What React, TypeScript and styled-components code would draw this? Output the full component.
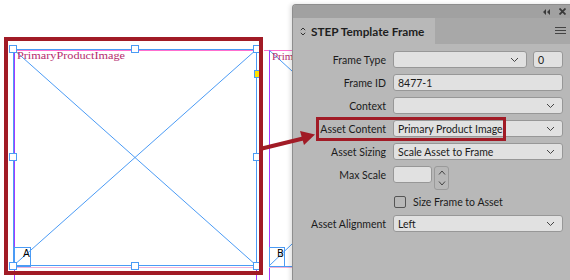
import { createGlobalStyle, styled } from "styled-components";

const Global = createGlobalStyle`
  html, body { margin: 0; padding: 0; background: #ffffff; }
  body { font-family: Lato, "Open Sans", sans-serif; }
`;

const Stage = styled.div`
  position: relative;
  width: 570px;
  height: 280px;
  overflow: hidden;
  background: #ffffff;
`;

const Canvas = styled.svg`
  position: absolute;
  left: 0;
  top: 0;
`;

const Callout = styled.div`
  position: absolute;
  left: 4px;
  top: 37px;
  width: 251px;
  height: 230px;
  border: 4px solid #a11b26;
`;

const Panel = styled.div`
  position: absolute;
  left: 292px;
  top: 4px;
  width: 282px;
  height: 280px;
  background: #b8b8b8;
  border-left: 1px solid #8e8e8e;
  border-top: 1px solid #8e8e8e;
  border-radius: 4px 0 0 0;
  box-shadow: -2px 0 4px rgba(0, 0, 0, 0.12);
  display: flex;
  flex-direction: column;
  font-family: Lato, "Open Sans", sans-serif;
  font-size: 10.5px;
  color: #1b1b1b;
`;

const TopBar = styled.div`
  height: 13px;
  background: #a1a1a1;
  border-radius: 3px 0 0 0;
  display: flex;
  align-items: center;
  justify-content: flex-end;
  gap: 9px;
  padding-right: 9px;
`;

const TabRow = styled.div`
  height: 26px;
  background: #a8a8a8;
  display: flex;
  align-items: stretch;
  justify-content: space-between;
`;

const Tab = styled.div`
  width: 135px;
  background: #b8b8b8;
  display: flex;
  align-items: center;
  gap: 5px;
  padding-left: 7px;
  font-size: 11.8px;
  font-weight: 700;
  white-space: nowrap;
  color: #1e1e1e;
`;

const MenuButton = styled.div`
  display: flex;
  align-items: center;
  padding-right: 9px;
`;

const Form = styled.div`
  position: relative;
  display: grid;
  grid-template-columns: 93px 170px;
  grid-auto-rows: minmax(17px, auto);
  column-gap: 7px;
  row-gap: 6px;
  padding-top: 7px;
  align-items: center;
`;

const Label = styled.div`
  text-align: right;
  white-space: nowrap;
`;

const Pair = styled.div`
  display: flex;
  gap: 6px;
  height: 17px;
`;

const Field = styled.div<{ $w?: number }>`
  position: relative;
  box-sizing: border-box;
  height: 17px;
  width: ${(p) => (p.$w ? `${p.$w}px` : "100%")};
  background: #e1e1e1;
  border: 1px solid #979797;
  border-radius: 3px;
  display: flex;
  align-items: center;
  padding-left: 4px;
  white-space: nowrap;
`;

const Chevron = styled.svg`
  position: absolute;
  right: 7px;
  top: 5px;
`;

const ScaleRow = styled.div`
  display: flex;
  gap: 2px;
  height: 17px;
  align-items: flex-start;
`;

const Spinner = styled.div`
  box-sizing: border-box;
  width: 15px;
  height: 24px;
  border: 1px solid #9a9a9a;
  border-radius: 3px;
  display: flex;
  flex-direction: column;
  align-items: center;
  justify-content: space-around;
`;

const CheckRow = styled.div`
  grid-column: 2;
  box-sizing: border-box;
  display: flex;
  align-items: center;
  gap: 7px;
  padding: 5px 0 0 1px;
  height: 20px;
`;

const Box = styled.div`
  box-sizing: border-box;
  width: 12px;
  height: 12px;
  border: 1px solid #555555;
  border-radius: 2px;
`;

const Highlight = styled.div`
  position: absolute;
  left: 23px;
  top: 73px;
  width: 184px;
  height: 18px;
  border: 3px solid #a11b26;
`;

const Arrow = styled.svg`
  position: absolute;
  left: 0;
  top: 0;
  pointer-events: none;
`;

const blue = "#4b9bf5";
const purple = "#a33cff";
const pink = "#ff6fcf";

function Handle({ x, y }: { x: number; y: number }) {
  return <rect x={x - 3.5} y={y - 3.5} width={7} height={7} fill="#fff" stroke={blue} strokeWidth={1} />;
}

function Down() {
  return (
    <Chevron width="9" height="6" viewBox="0 0 9 6">
      <path d="M1 1 L4.5 4.5 L8 1" fill="none" stroke="#444" strokeWidth="1" />
    </Chevron>
  );
}

function Dropdown({ value, w }: { value?: string; w?: number }) {
  return (
    <Field $w={w}>
      {value}
      <Down />
    </Field>
  );
}

export default function App() {
  const handles = [
    [13, 49], [135, 49], [257, 49],
    [13, 157], [257, 157],
    [13, 266], [135, 266], [257, 266],
  ];
  return (
    <Stage>
      <Global />
      <Canvas width="570" height="280" viewBox="0 0 570 280">
        <line x1="14.5" y1="49" x2="14.5" y2="280" stroke={purple} />
        <line x1="256.5" y1="49" x2="256.5" y2="280" stroke={purple} />
        <line x1="269.5" y1="50" x2="269.5" y2="280" stroke={purple} />
        <line x1="13" y1="50.5" x2="257" y2="50.5" stroke={pink} />
        <line x1="13" y1="267.5" x2="257" y2="267.5" stroke="#f2b2d8" />
        <line x1="264" y1="50.5" x2="292" y2="50.5" stroke={pink} />
        <rect x="13.5" y="49.5" width="243" height="216" fill="none" stroke={blue} />
        <line x1="13" y1="49" x2="257" y2="266" stroke={blue} />
        <line x1="257" y1="49" x2="13" y2="266" stroke={blue} />
        <text x="17" y="59" fontFamily="'Liberation Serif', serif" fontSize="11" fill="#b52c6e" textLength="108" lengthAdjust="spacingAndGlyphs">PrimaryProductImage</text>
        <rect x="14.5" y="247.5" width="16" height="19" fill="none" stroke={blue} />
        <text x="23" y="257" fontFamily="'DejaVu Sans', sans-serif" fontSize="10" fill="#000">A</text>
        {handles.map(([x, y]) => (
          <Handle key={`${x}-${y}`} x={x} y={y} />
        ))}
        <rect x="254.5" y="70.5" width="6" height="7" fill="#ffe100" stroke={blue} />
        <line x1="269" y1="50" x2="292" y2="71" stroke={blue} />
        <text x="272" y="60" fontFamily="'Liberation Serif', serif" fontSize="11" fill="#b52c6e">Prim</text>
        <line x1="269" y1="266.5" x2="292" y2="266.5" stroke={blue} />
        <line x1="269" y1="267.5" x2="292" y2="267.5" stroke="#f2b2d8" />
        <line x1="269" y1="266" x2="292" y2="244" stroke={blue} />
        <rect x="269.5" y="247.5" width="15" height="19" fill="none" stroke={blue} />
        <text x="277" y="257" fontFamily="'DejaVu Sans', sans-serif" fontSize="10" fill="#000">B</text>
      </Canvas>
      <Callout />
      <Panel>
        <TopBar>
          <svg width="8" height="6" viewBox="0 0 8 6">
            <path d="M4 0 L1 3 L4 6 Z M8 0 L5 3 L8 6 Z" fill="#3a3a3a" />
          </svg>
          <svg width="7" height="7" viewBox="0 0 7 7">
            <path d="M0.5 0.5 L6.5 6.5 M6.5 0.5 L0.5 6.5" stroke="#3a3a3a" strokeWidth="1.8" />
          </svg>
        </TopBar>
        <TabRow>
          <Tab>
            <svg width="6" height="9" viewBox="0 0 6 9">
              <path d="M0.8 3.2 L3 1 L5.2 3.2 M0.8 5.8 L3 8 L5.2 5.8" fill="none" stroke="#333" strokeWidth="1" />
            </svg>
            STEP Template Frame
          </Tab>
          <MenuButton>
            <svg width="11" height="8" viewBox="0 0 11 8">
              <path d="M0 0.5 H11 M0 3.5 H11 M0 6.5 H11" stroke="#444" strokeWidth="1" />
            </svg>
          </MenuButton>
        </TabRow>
        <Form>
          <Label>Frame Type</Label>
          <Pair>
            <Dropdown w={134} />
            <Field $w={30}>0</Field>
          </Pair>
          <Label>Frame ID</Label>
          <Field>8477-1</Field>
          <Label>Context</Label>
          <Dropdown />
          <Label>Asset Content</Label>
          <Dropdown value="Primary Product Image" />
          <Label>Asset Sizing</Label>
          <Dropdown value="Scale Asset to Frame" />
          <Label>Max Scale</Label>
          <ScaleRow>
            <Field $w={39} />
            <Spinner>
              <svg width="8" height="5" viewBox="0 0 8 5">
                <path d="M1 4.5 L4 1 L7 4.5" fill="none" stroke="#444" strokeWidth="1" />
              </svg>
              <svg width="8" height="5" viewBox="0 0 8 5">
                <path d="M1 0.5 L4 4 L7 0.5" fill="none" stroke="#444" strokeWidth="1" />
              </svg>
            </Spinner>
          </ScaleRow>
          <CheckRow>
            <Box />
            Size Frame to Asset
          </CheckRow>
          <Label>Asset Alignment</Label>
          <Dropdown value="Left" />
          <Highlight />
        </Form>
      </Panel>
      <Arrow width="570" height="280" viewBox="0 0 570 280">
        <path d="M262 148.5 L303 138.5" stroke="#a11b26" strokeWidth="4" />
        <path d="M315 134.5 L300 131 L304 145 Z" fill="#a11b26" />
      </Arrow>
    </Stage>
  );
}
